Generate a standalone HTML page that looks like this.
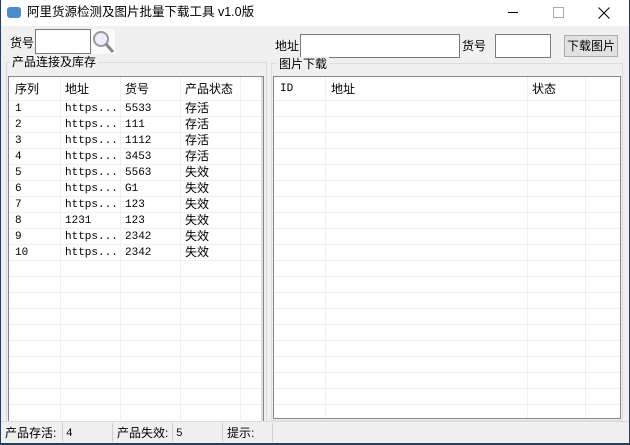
<html><head><style>
body{margin:0;width:630px;height:445px;overflow:hidden;background:#f0f0f0;font-family:"Liberation Sans","Noto Sans CJK SC",sans-serif;font-size:12px;color:#000;position:relative}
.a{position:absolute}
.t{position:absolute;white-space:nowrap;line-height:14px}
.m{font-family:"Liberation Mono","Noto Sans CJK SC",monospace;font-size:11px}
.inp{position:absolute;background:#fff;border:1px solid #7a7a7a;box-sizing:border-box}
.lv{position:absolute;background:#fff;border:1px solid #828790;box-sizing:border-box;overflow:hidden}
.h{position:absolute;left:0;right:0;height:1px;background:#f0f0f0}
.v{position:absolute;top:0;bottom:0;width:1px;background:#f0f0f0}
.grp{position:absolute;border:1px solid #dcdcdc;box-sizing:border-box}
</style></head><body>
<div class="a" style="left:0;top:0;width:630px;height:26px;background:#fff"></div>
<div class="a" style="left:7px;top:7px;width:14px;height:11px;background:#4a8ccc;border-radius:3px"></div>
<div class="t" style="left:27px;top:5px;font-size:12.5px">阿里货源检测及图片批量下载工具 v1.0版</div>
<div class="a" style="left:508px;top:12px;width:10px;height:1px;background:#000"></div>
<div class="a" style="left:553px;top:7px;width:9px;height:9px;border:1px solid #aaa"></div>
<svg class="a" style="left:598px;top:7px" width="12" height="12"><path d="M0.5 0.5L11.5 11.5M11.5 0.5L0.5 11.5" stroke="#000" stroke-width="1"/></svg>
<div class="a" style="left:0;top:0;width:1px;height:445px;background:#2a3d5c"></div>
<div class="a" style="left:629px;top:0;width:1px;height:445px;background:#2a3d5c"></div>
<div class="a" style="left:0;top:443px;width:630px;height:2px;background:#2a3d5c"></div>

<div class="t" style="left:10px;top:36px">货号</div>
<div class="inp" style="left:35px;top:29px;width:56px;height:25px"></div>
<div class="a" style="left:91px;top:29px;width:24px;height:25px;background:#fafafa"></div>
<svg class="a" style="left:91px;top:29px" width="24" height="25"><circle cx="10" cy="10" r="7" fill="#eef" stroke="#999" stroke-width="2"/><line x1="15" y1="15" x2="22" y2="23" stroke="#888" stroke-width="3"/></svg>
<div class="t" style="left:275px;top:39px">地址</div>
<div class="inp" style="left:300px;top:34px;width:160px;height:24px"></div>
<div class="t" style="left:462px;top:39px">货号</div>
<div class="inp" style="left:495px;top:34px;width:56px;height:24px"></div>
<div class="a" style="left:564px;top:35px;width:54px;height:22px;background:#e1e1e1;border:1px solid #adadad;box-sizing:border-box"></div>
<div class="t" style="left:567px;top:39px">下载图片</div>

<div class="grp" style="left:6px;top:62px;width:261px;height:360px"></div>
<div class="t" style="left:10px;top:55px;background:#f0f0f0;padding:0 2px">产品连接及库存</div>
<div class="grp" style="left:271px;top:63px;width:352px;height:358px"></div>
<div class="t" style="left:277px;top:57px;background:#f0f0f0;padding:0 2px">图片下载</div>

<div class="lv" style="left:8px;top:76px;width:256px;height:346px">
<div class="h" style="top:23px"></div><div class="h" style="top:39px"></div><div class="h" style="top:55px"></div><div class="h" style="top:71px"></div><div class="h" style="top:87px"></div><div class="h" style="top:103px"></div><div class="h" style="top:119px"></div><div class="h" style="top:135px"></div><div class="h" style="top:151px"></div><div class="h" style="top:167px"></div><div class="h" style="top:183px"></div><div class="h" style="top:199px"></div><div class="h" style="top:215px"></div><div class="h" style="top:231px"></div><div class="h" style="top:247px"></div><div class="h" style="top:263px"></div><div class="h" style="top:279px"></div><div class="h" style="top:295px"></div><div class="h" style="top:311px"></div><div class="h" style="top:327px"></div>
<div class="v" style="left:51px"></div><div class="v" style="left:111px"></div><div class="v" style="left:171px"></div><div class="v" style="left:231px"></div>
<div class="a" style="right:0;top:0;width:2px;bottom:0;background:#ddd"></div>
<div class="t" style="left:6px;top:5px">序列</div><div class="t" style="left:56px;top:5px">地址</div><div class="t" style="left:116px;top:5px">货号</div><div class="t" style="left:176px;top:5px">产品状态</div>
<div class="m t" style="left:6px;top:24px;line-height:16px">1<br>2<br>3<br>4<br>5<br>6<br>7<br>8<br>9<br>10</div>
<div class="m t" style="left:56px;top:24px;line-height:16px">https...<br>https...<br>https...<br>https...<br>https...<br>https...<br>https...<br>1231<br>https...<br>https...</div>
<div class="m t" style="left:116px;top:24px;line-height:16px">5533<br>111<br>1112<br>3453<br>5563<br>G1<br>123<br>123<br>2342<br>2342</div>
<div class="t" style="left:176px;top:23px;line-height:16px">存活<br>存活<br>存活<br>存活<br>失效<br>失效<br>失效<br>失效<br>失效<br>失效</div>
</div>

<div class="lv" style="left:273px;top:76px;width:348px;height:343px">
<div class="h" style="top:23px"></div><div class="h" style="top:39px"></div><div class="h" style="top:55px"></div><div class="h" style="top:71px"></div><div class="h" style="top:87px"></div><div class="h" style="top:103px"></div><div class="h" style="top:119px"></div><div class="h" style="top:135px"></div><div class="h" style="top:151px"></div><div class="h" style="top:167px"></div><div class="h" style="top:183px"></div><div class="h" style="top:199px"></div><div class="h" style="top:215px"></div><div class="h" style="top:231px"></div><div class="h" style="top:247px"></div><div class="h" style="top:263px"></div><div class="h" style="top:279px"></div><div class="h" style="top:295px"></div><div class="h" style="top:311px"></div><div class="h" style="top:327px"></div>
<div class="v" style="left:51px"></div><div class="v" style="left:253px"></div><div class="v" style="left:311px"></div>
<div class="m t" style="left:6px;top:5px">ID</div><div class="t" style="left:57px;top:5px">地址</div><div class="t" style="left:258px;top:5px">状态</div>
</div>

<div class="a" style="left:1px;top:421px;width:628px;height:1px;background:#dcdcdc"></div>
<div class="t" style="left:5px;top:426px">产品存活:</div><div class="t m" style="left:66px;top:427px">4</div>
<div class="t" style="left:117px;top:426px">产品失效:</div><div class="t m" style="left:176px;top:427px">5</div>
<div class="t" style="left:227px;top:426px">提示:</div>
<div class="a" style="left:62px;top:423px;width:1px;height:19px;background:#d0d0d0"></div>
<div class="a" style="left:112px;top:423px;width:1px;height:19px;background:#d0d0d0"></div>
<div class="a" style="left:172px;top:423px;width:1px;height:19px;background:#d0d0d0"></div>
<div class="a" style="left:222px;top:423px;width:1px;height:19px;background:#d0d0d0"></div>
<div class="a" style="left:272px;top:423px;width:1px;height:19px;background:#d0d0d0"></div>
</body></html>
